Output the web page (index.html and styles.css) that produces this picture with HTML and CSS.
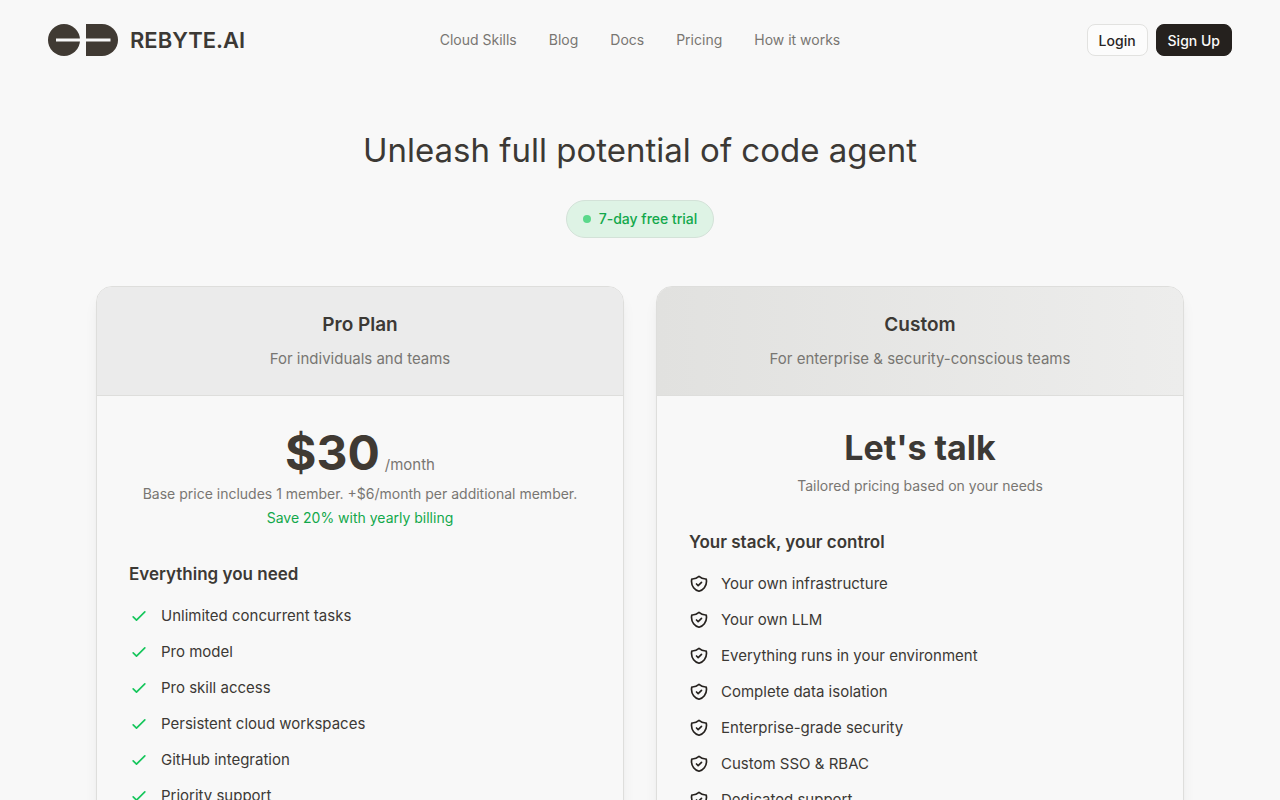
FILE: index.html
```html
<!DOCTYPE html>
<html lang="en">
<head>
  <meta charset="UTF-8" />
  <meta name="viewport" content="width=device-width, initial-scale=1.0" />
  <title>Pricing - REBYTE.AI</title>
  <link rel="stylesheet" href="styles.css">
</head>
<body>

  <!-- Shared icons -->
  <svg class="icon-defs" aria-hidden="true">
    <symbol id="check" viewBox="0 0 24 24">
      <path d="M5 13l4 4L19 7" />
    </symbol>
    <symbol id="shield" viewBox="0 0 24 24">
      <path d="M9 12l2 2 4-4m5.618-4.016A11.955 11.955 0 0112 2.944a11.955 11.955 0 01-8.618 3.04A12.02 12.02 0 003 9c0 5.591 3.824 10.29 9 11.622 5.176-1.332 9-6.03 9-11.622 0-1.042-.133-2.052-.382-3.016z" />
    </symbol>
  </svg>

  <header class="header">
    <a href="#" class="logo">
      <svg class="logo-mark" viewBox="0 0 70 32" aria-hidden="true">
        <circle cx="16" cy="16" r="16" />
        <path d="M38 0h16a16 16 0 0 1 0 32H38z" />
        <path class="logo-line" d="M8 14.500h24v3H8zM38 14.500h24.500v3H38z" />
      </svg>
      <span>REBYTE.AI</span>
    </a>
    <nav class="nav">
      <a href="#">Cloud Skills</a>
      <a href="#">Blog</a>
      <a href="#">Docs</a>
      <a href="#">Pricing</a>
      <a href="#">How it works</a>
    </nav>
    <div class="actions">
      <button type="button" class="btn">Login</button>
      <button type="button" class="btn btn-dark">Sign Up</button>
    </div>
  </header>

  <main class="pricing">
    <h1>Unleash full potential of code agent</h1>
    <div class="trial"><span class="dot"></span>7-day free trial</div>

    <div class="plans">
      <section class="card">
        <div class="card-head">
          <h2>Pro Plan</h2>
          <p>For individuals and teams</p>
        </div>
        <div class="card-body">
          <div class="price"><strong>$30</strong> <span>/month</span></div>
          <p class="note">Base price includes 1 member. +$6/month per additional member.</p>
          <p class="save">Save 20% with yearly billing</p>
          <h3>Everything you need</h3>
          <ul class="features">
            <li><svg class="icon-check"><use href="#check" /></svg>Unlimited concurrent tasks</li>
            <li><svg class="icon-check"><use href="#check" /></svg>Pro model</li>
            <li><svg class="icon-check"><use href="#check" /></svg>Pro skill access</li>
            <li><svg class="icon-check"><use href="#check" /></svg>Persistent cloud workspaces</li>
            <li><svg class="icon-check"><use href="#check" /></svg>GitHub integration</li>
            <li><svg class="icon-check"><use href="#check" /></svg>Priority support</li>
          </ul>
        </div>
      </section>

      <section class="card">
        <div class="card-head card-head-custom">
          <h2>Custom</h2>
          <p>For enterprise &amp; security-conscious teams</p>
        </div>
        <div class="card-body">
          <div class="talk">Let's talk</div>
          <p class="note">Tailored pricing based on your needs</p>
          <h3>Your stack, your control</h3>
          <ul class="features">
            <li><svg><use href="#shield" /></svg>Your own infrastructure</li>
            <li><svg><use href="#shield" /></svg>Your own LLM</li>
            <li><svg><use href="#shield" /></svg>Everything runs in your environment</li>
            <li><svg><use href="#shield" /></svg>Complete data isolation</li>
            <li><svg><use href="#shield" /></svg>Enterprise-grade security</li>
            <li><svg><use href="#shield" /></svg>Custom SSO &amp; RBAC</li>
            <li><svg><use href="#shield" /></svg>Dedicated support</li>
          </ul>
        </div>
      </section>
    </div>
  </main>

</body>
</html>
```
FILE: styles.css
```css
* {
  box-sizing: border-box;
}

body {
  margin: 0;
  font-family: Inter, "Liberation Sans", sans-serif;
  font-size: 15px;
  line-height: 24px;
  color: #3c3935;
  background-color: #f8f8f8;
}

h1, h2, h3, p, ul {
  margin: 0;
  padding: 0;
}

a {
  color: inherit;
  text-decoration: none;
}

.icon-defs {
  display: none;
}

/* Header */
.header {
  display: grid;
  grid-template-columns: 1fr auto 1fr;
  align-items: center;
  padding: 24px 48px;
}

.logo {
  display: flex;
  align-items: center;
  gap: 12px;
  font-size: 22px;
  font-weight: 600;
  line-height: 32px;
}

.logo-mark {
  width: 70px;
  height: 32px;
  fill: #403a33;
}

.logo-mark .logo-line {
  fill: #f8f8f8;
}

.nav {
  display: flex;
  gap: 32px;
  font-size: 14px;
  line-height: 20px;
  color: #787672;
}

.actions {
  display: flex;
  justify-content: flex-end;
  gap: 8px;
}

.btn {
  height: 32px;
  padding: 0 11px;
  font-family: inherit;
  font-size: 14px;
  font-weight: 500;
  color: #292524;
  background-color: #fcfcfc;
  border: 1px solid #e2e2e0;
  border-radius: 8px;
  cursor: pointer;
}

.btn-dark {
  color: #fafaf9;
  background-color: #25211e;
  border-color: #25211e;
}

/* Pricing */
.pricing {
  display: flex;
  flex-direction: column;
  align-items: center;
  padding: 50px 96px 64px;
}

h1 {
  font-size: 33px;
  font-weight: 400;
  line-height: 40px;
  text-align: center;
}

.trial {
  display: flex;
  align-items: center;
  gap: 8px;
  margin-top: 30px;
  padding: 8px 16px;
  font-size: 14px;
  font-weight: 500;
  line-height: 20px;
  color: #12a84b;
  background-color: #def3e5;
  border: 1px solid #d3e2d8;
  border-radius: 20px;
}

.dot {
  width: 8px;
  height: 8px;
  border-radius: 50%;
  background-color: #5bd88b;
}

.plans {
  display: grid;
  grid-template-columns: 1fr 1fr;
  gap: 32px;
  width: 100%;
  max-width: 1088px;
  margin-top: 48px;
}

.card {
  overflow: hidden;
  border: 1px solid #dededc;
  border-radius: 16px;
  box-shadow: 0 10px 15px -3px rgba(0, 0, 0, 0.08), 0 4px 6px -4px rgba(0, 0, 0, 0.08);
}

.card-head {
  padding: 24px 32px;
  text-align: center;
  color: #787672;
  background-color: #ebebeb;
  border-bottom: 1px solid #dededc;
}

.card-head-custom {
  background: linear-gradient(to right, #e1e1df, #ededec);
}

.card-head h2 {
  margin-bottom: 8px;
  font-size: 19px;
  font-weight: 600;
  line-height: 28px;
  color: #3c3935;
}

.card-body {
  padding: 32px;
}

.talk,
.note,
.save {
  text-align: center;
}

.price {
  display: flex;
  justify-content: center;
  align-items: baseline;
  gap: 5px;
  color: #787672;
}

.price strong {
  font-size: 48px;
  font-weight: 700;
  line-height: 50px;
  color: #403a33;
}

.talk {
  font-size: 34px;
  font-weight: 700;
  line-height: 40px;
}

.note,
.save {
  font-size: 14px;
  line-height: 20px;
}

.note {
  margin-top: 8px;
  color: #787672;
}

.price + .note {
  margin-top: 6px;
}

.save {
  margin-top: 4px;
  color: #12a84b;
}

h3 {
  margin-top: 32px;
  margin-bottom: 16px;
  font-size: 17px;
  font-weight: 600;
  line-height: 28px;
}

.features {
  display: flex;
  flex-direction: column;
  gap: 12px;
  list-style: none;
}

.features li {
  display: flex;
  align-items: center;
  gap: 12px;
}

.features svg {
  flex-shrink: 0;
  width: 20px;
  height: 20px;
  fill: none;
  stroke: #25211e;
  stroke-width: 2;
  stroke-linecap: round;
  stroke-linejoin: round;
}

.features .icon-check {
  stroke: #16c65c;
}
```
